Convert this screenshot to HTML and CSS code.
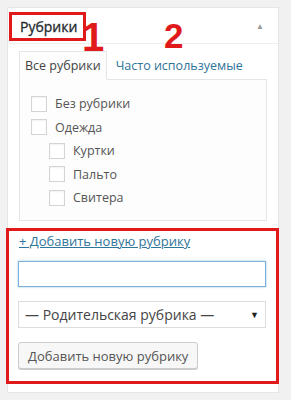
FILE: index.html
```html
<!DOCTYPE html>
<html lang="ru">
<head>
    <meta charset="UTF-8">
    <title>Рубрики</title>
    <link rel="stylesheet" href="styles.css">
</head>
<body>
    <div class="postbox">
        <div class="hndle">
            <h2 class="hndle-title">Рубрики</h2>
            <span class="mark mark-1">1</span>
            <span class="mark mark-2">2</span>
            <span class="toggle">&#9650;</span>
        </div>
        <div class="inside">
            <ul class="tabs">
                <li class="tab active">Все рубрики</li>
                <li class="tab">Часто используемые</li>
            </ul>
            <div class="tabs-panel">
                <ul class="checklist">
                    <li><label><span class="box"></span>Без рубрики</label></li>
                    <li><label><span class="box"></span>Одежда</label>
                        <ul class="children">
                            <li><label><span class="box"></span>Куртки</label></li>
                            <li><label><span class="box"></span>Пальто</label></li>
                            <li><label><span class="box"></span>Свитера</label></li>
                        </ul>
                    </li>
                </ul>
            </div>
            <div class="adder">
                <a class="add-link" href="#">+ Добавить новую рубрику</a>
                <div class="text-field"></div>
                <div class="select-field">
                    <span>— Родительская рубрика —</span>
                    <span class="arrow">&#9660;</span>
                </div>
                <button class="button">Добавить новую рубрику</button>
            </div>
        </div>
    </div>
</body>
</html>
```

FILE: styles.css
```css
body {
    margin: 0;
    padding: 7px 12px 0 7px;
    background: #f1f1f1;
    font-family: 'Open Sans', sans-serif;
    font-size: 12.5px;
    color: #444;
}

.postbox {
    background: #fff;
    border: 1px solid #e5e5e5;
    height: 386px;
    box-sizing: border-box;
}

.hndle {
    position: relative;
    height: 35px;
    border-bottom: 1px solid #eee;
}

.hndle-title {
    margin: 4px 0 0 1px;
    display: inline-block;
    padding: 3px 6px 3px 8px;
    border: 3px solid #e01a1a;
    font-size: 14px;
    font-weight: 400;
    -webkit-text-stroke: 0.3px #23282d;
    color: #23282d;
    line-height: 17px;
}

.mark {
    position: absolute;
    color: #e01a1a;
    font-family: 'Liberation Sans', sans-serif;
    font-weight: bold;
    font-size: 40px;
    line-height: 1;
}

.mark-1 {
    left: 74px;
    top: 9px;
}

.mark-2 {
    left: 156px;
    top: 10px;
    font-size: 35px;
}

.toggle {
    position: absolute;
    right: 14px;
    top: 12px;
    font-size: 8px;
    color: #999;
}

.inside {
    padding: 7px 11px 0 11px;
}

.tabs {
    list-style: none;
    margin: 0;
    padding: 0;
    display: flex;
    position: relative;
    z-index: 1;
}

.tab {
    padding: 6px 8px 6px 8px;
    color: #2f7499;
    line-height: 15px;
    border: 1px solid transparent;
}

.tab.active {
    color: #444;
    background: #fdfdfd;
    border-color: #e5e5e5;
    border-bottom-color: #fdfdfd;
    padding: 6px 5px 6px 5px;
}

.tabs-panel {
    background: #fdfdfd;
    border: 1px solid #e5e5e5;
    margin-top: -1px;
    height: 142px;
    box-sizing: border-box;
    padding: 12px 0 0 11px;
}

.checklist,
.children {
    list-style: none;
    margin: 0;
    padding: 0;
}

.children {
    padding-left: 18px;
}

.checklist label {
    display: flex;
    align-items: center;
    height: 23.5px;
    color: #555;
}

.box {
    width: 14px;
    height: 14px;
    border: 1px solid #d4d4d4;
    box-shadow: inset 0 1px 2px rgba(0, 0, 0, 0.06);
    background: #fff;
    margin-right: 8px;
}

.adder {
    margin: 7px -12px 0 -13px;
    border: 3px solid #e01a1a;
    padding: 1px 9px 10px 9px;
    height: 156px;
    box-sizing: border-box;
}

.add-link {
    display: block;
    color: #2f7499;
    text-decoration: underline;
    line-height: 18px;
    padding-left: 1px;
    font-size: 13px;
}

.text-field {
    margin-top: 11px;
    height: 26px;
    border: 1px solid #7eb1db;
    box-shadow: 0 0 2px rgba(30, 140, 190, 0.5);
    box-sizing: border-box;
    margin-right: 1px;
}

.select-field {
    margin-top: 14px;
    height: 27px;
    border: 1px solid #ddd;
    box-sizing: border-box;
    display: flex;
    align-items: center;
    justify-content: space-between;
    padding: 0 6px 0 6px;
    font-size: 14px;
    color: #444;
    margin-right: 1px;
}

.arrow {
    font-size: 9px;
    color: #222;
}

.button {
    margin-top: 14px;
    height: 27px;
    padding: 0 9px;
    background: #f7f7f7;
    border: 1px solid #ccc;
    border-radius: 3px;
    box-shadow: 0 1px 0 #ccc;
    font-family: 'Open Sans', sans-serif;
    font-size: 13px;
    color: #555;
}
```
